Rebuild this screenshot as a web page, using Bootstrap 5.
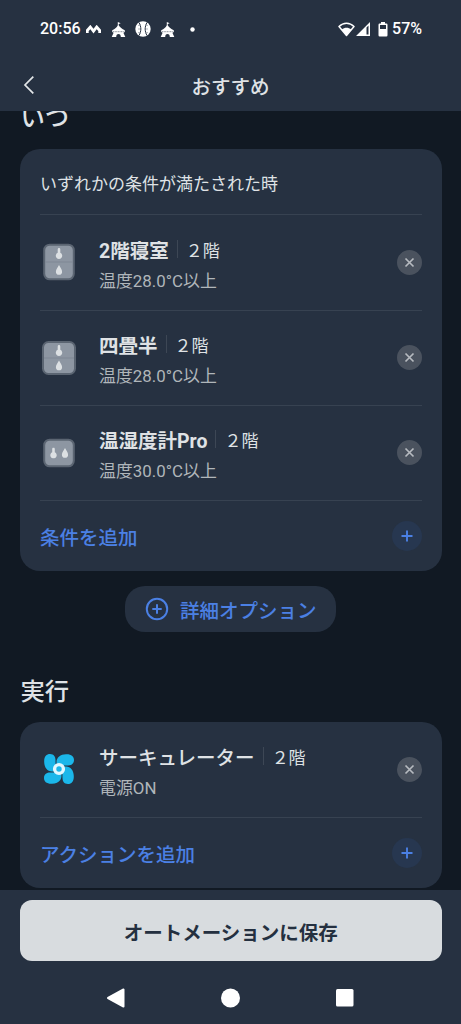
<!DOCTYPE html>
<html lang="ja">
<head>
<meta charset="utf-8">
<meta name="viewport" content="width=device-width, initial-scale=1">
<title>おすすめ</title>
<link rel="stylesheet" href="https://cdn.jsdelivr.net/npm/bootstrap@5.3.0/dist/css/bootstrap.min.css">
<style>
  :root { --panel:#263141; --page:#111923; --line:#374251; --txt:#dfe2e5; --dim:#b0b6ba; --accent:#4b80e4; }
  body { background:var(--page); color:var(--txt); font-family:Roboto,"Noto Sans CJK JP",sans-serif; height:1024px; overflow:hidden; }
  svg { display:block; flex:none; }
  .top-area { height:111px; background:var(--panel); }
  .status { height:58px; padding:0 39px 0 40px; color:#fff; font-size:16px; font-weight:500; }
  .title-bar { height:53px; display:grid; grid-template-columns:60px 1fr 60px; }
  .screen-title { font-size:19.5px; font-weight:500; line-height:28px; padding-top:7px; }
  .scroller { height:779px; padding:0 19.500px 0 20px; overflow:hidden; }
  .sec-title { font-size:24.3px; font-weight:500; line-height:36px; margin:0 0.500px; }
  .panel { background:var(--panel); border-radius:20px; padding:0 19.500px 0 20px; }
  .panel-head { height:66px; font-size:17px; line-height:26px; padding-top:22px; border-bottom:1.500px solid var(--line); }
  .item { height:95px; border-bottom:1px solid var(--line); }
  .item.first { height:96px; }
  .item-icon { width:38px; margin-right:21px; }
  .item-text { padding-top:7px; }
  .item-name { font-size:19.5px; font-weight:700; line-height:30px; position:relative; top:1px; }
  .item-name.kana { font-weight:500; }
  .room { font-size:17px; line-height:30px; }
  .sep { width:1px; height:18px; background:#3d4755; margin:0 8px 4px 8px; }
  .item-sub { font-size:16.900px; line-height:30px; color:var(--dim); }
  .add-row { height:70px; color:var(--accent); font-size:19.5px; font-weight:500; }
  .add-row span, .option-btn span { padding-top:6px; }
  .option-btn { width:211px; height:46px; border-radius:20px; background:var(--panel); color:var(--accent); font-size:19.5px; font-weight:500; margin:15px auto 0; }
  .bottom-area { height:134px; background:var(--panel); padding:10px 19.500px 0 20px; }
  .save-btn { height:61px; border-radius:12px; background:#d8dcdf; color:#243040; font-size:19.5px; font-weight:700; }
  .save-btn span { padding-top:6px; }
  .nav-keys { height:73px; }
</style>
</head>
<body>
<svg width="0" height="0" class="position-absolute">
  <defs>
    <symbol id="tent" viewBox="0 0 14 15"><path fill="currentColor" d="M6.300 0l2.900 1.200-2 .9v1.200C8.500 5.500 10.500 7 13.300 8.300v1.500l-1 .9h-.4l1.900 4.300H9.300c0-2-.8-3-2.300-3s-2.300 1-2.300 3H.2l1.900-4.300h-.4l-1-.9V8.300C3.500 7 5.500 5.500 6.300 3.300z"/><path d="M1.600 9.700h11" stroke="#263141" stroke-width=".6" stroke-dasharray="1 .6"/></symbol>
    <symbol id="close" viewBox="0 0 25 25"><circle cx="12.500" cy="12.500" r="12.500" fill="#4a525e"/><path d="M8.500 8.500l8 8m0-8l-8 8" stroke="#b7bbc0" stroke-width="1.700"/></symbol>
    <symbol id="plus" viewBox="0 0 30 30"><circle cx="15" cy="15" r="15" fill="#273750"/><path d="M9.500 15h11M15 9.500v11" stroke="#4b80e4" stroke-width="1.900"/></symbol>
    <symbol id="thermo" viewBox="0 0 8 11"><path fill="#dce0e3" d="M2.700 1.400a1.300 1.300 0 0 1 2.600 0V4.800a3.200 3.200 0 1 1-2.600 0z"/></symbol>
    <symbol id="drop" viewBox="0 0 8 11"><path fill="#dce0e3" d="M4 .6C5.300 3 7.100 5 7.100 7.200a3.100 3.100 0 0 1-6.200 0C.9 5 2.700 3 4 .6z"/></symbol>
  </defs>
</svg>

<header class="top-area">
  <div class="status d-flex align-items-center">
    <span>20:56</span>
    <svg style="margin-left:5px" width="15" height="9" viewBox="0 0 15 9"><path d="M1.300 8V5.500L4.300 2l3.200 4.200L10.700 2l3 3.500V8" fill="none" stroke="#fff" stroke-width="2.800"/></svg>
    <svg style="margin-left:10px" width="15" height="15"><use href="#tent"/></svg>
    <svg style="margin-left:9px" width="16" height="16" viewBox="0 0 16 16"><circle cx="8" cy="8" r="7.700" fill="#fff"/><path d="M4 1.500c2.400 4 2.400 9 0 13M12 1.500c-2.400 4-2.400 9 0 13" fill="none" stroke="#263141" stroke-width="1"/><path d="M3 4.500l3-.5M3 8h3.500M3 11.500l3 .5M13 4.500l-3-.5M13 8H9.500M13 11.500l-3 .5" stroke="#7b828c" stroke-width=".6"/></svg>
    <svg style="margin-left:9px" width="15" height="15"><use href="#tent"/></svg>
    <svg style="margin-left:15px" width="5" height="5" viewBox="0 0 5 5"><circle cx="2.500" cy="2.500" r="2.200" fill="#fff"/></svg>
    <svg class="ms-auto" width="17" height="15" viewBox="0 0 17 15"><path d="M1 4.600C5.300.2 11.700.2 16 4.600L8.500 13.500z" fill="none" stroke="#fff" stroke-width="1.500" stroke-linejoin="round"/><path d="M3.800 7.600c2.800-2.500 6.600-2.500 9.400 0L8.500 13.500z" fill="#fff"/></svg>
    <svg style="margin-left:1px" width="15" height="14" viewBox="0 0 15 14"><path fill="#fff" fill-rule="evenodd" d="M14 0v14H0zM10.500 5.500v7h2v-9z"/></svg>
    <svg style="margin-left:7px;margin-right:4px" width="10" height="15" viewBox="0 0 10 15"><path fill="#fff" fill-rule="evenodd" d="M3 0h4v1.500h1.300q1.200 0 1.200 1.200v10.600q0 1.200-1.200 1.200H1.700q-1.200 0-1.200-1.200V2.700q0-1.200 1.200-1.200H3zM2 3v4h6V3z"/></svg>
    <span>57%</span>
  </div>
  <div class="title-bar align-items-center">
    <svg style="margin-left:23px" width="12" height="20" viewBox="0 0 12 20"><path d="M10.300 1.700L2 10l8.300 8.300" fill="none" stroke="#e3e6e8" stroke-width="1.700"/></svg>
    <h1 class="screen-title text-center m-0">おすすめ</h1>
  </div>
</header>

<main class="scroller">
  <h2 class="sec-title" style="margin-top:-11px">いつ</h2>
  <section class="panel" style="margin-top:12.500px">
    <div class="panel-head">いずれかの条件が満たされた時</div>
    <div class="item first d-flex align-items-center">
      <div class="item-icon"><svg width="38" height="38" viewBox="0 0 38 38"><rect x="4.200" y="1.700" width="29.600" height="34.600" rx="5.500" fill="#8d96a2" stroke="#5b6572" stroke-width="2"/><path d="M5 19h28" stroke="#7e8794"/><use href="#thermo" x="15" y="5" width="8" height="11"/><use href="#drop" x="15" y="21.500" width="8" height="11"/></svg></div>
      <div class="item-text flex-grow-1">
        <div class="d-flex align-items-center"><span class="item-name">2階寝室</span><span class="sep"></span><span class="room">２階</span></div>
        <div class="item-sub">温度28.0°C以上</div>
      </div>
      <svg width="25" height="25"><use href="#close"/></svg>
    </div>
    <div class="item d-flex align-items-center">
      <div class="item-icon"><svg width="38" height="38" viewBox="0 0 38 38"><rect x="3" y="3" width="32" height="32" rx="5.500" fill="#8d96a2" stroke="#5b6572" stroke-width="2"/><path d="M4 19h30" stroke="#7e8794"/><use href="#thermo" x="15" y="6" width="8" height="11"/><use href="#drop" x="15" y="21" width="8" height="11"/></svg></div>
      <div class="item-text flex-grow-1">
        <div class="d-flex align-items-center"><span class="item-name">四畳半</span><span class="sep"></span><span class="room">２階</span></div>
        <div class="item-sub">温度28.0°C以上</div>
      </div>
      <svg width="25" height="25"><use href="#close"/></svg>
    </div>
    <div class="item d-flex align-items-center">
      <div class="item-icon"><svg width="38" height="38" viewBox="0 0 38 38"><rect x="4.200" y="5.700" width="29.600" height="26.600" rx="5.500" fill="#8d96a2" stroke="#5b6572" stroke-width="2"/><use href="#thermo" x="9.500" y="13.500" width="8" height="11"/><use href="#drop" x="21" y="13.500" width="8" height="11"/></svg></div>
      <div class="item-text flex-grow-1">
        <div class="d-flex align-items-center"><span class="item-name">温湿度計Pro</span><span class="sep"></span><span class="room">２階</span></div>
        <div class="item-sub">温度30.0°C以上</div>
      </div>
      <svg width="25" height="25"><use href="#close"/></svg>
    </div>
    <div class="add-row d-flex align-items-center justify-content-between"><span>条件を追加</span><svg width="30" height="30"><use href="#plus"/></svg></div>
  </section>

  <div class="option-btn d-flex align-items-center justify-content-center">
    <svg width="24" height="24" viewBox="0 0 24 24" style="margin-right:11px"><circle cx="12" cy="12" r="10.200" fill="none" stroke="#4b80e4" stroke-width="2"/><path d="M7.300 12h9.400M12 7.300v9.400" stroke="#4b80e4" stroke-width="2"/></svg>
    <span>詳細オプション</span>
  </div>

  <h2 class="sec-title" style="margin-top:42px">実行</h2>
  <section class="panel" style="margin-top:12px">
    <div class="item first d-flex align-items-center">
      <div class="item-icon"><svg width="38" height="38" viewBox="0 0 38 38"><g fill="#1bb7ea"><path id="blade" d="M18 17C14 10 18.500 4.300 26 4.200C31.500 4 34 6.500 34 10C34 14 31 15.500 28 15.500C24 15.500 23 15 21 19z"/><use href="#blade" transform="rotate(90 19 19)"/><use href="#blade" transform="rotate(180 19 19)"/><use href="#blade" transform="rotate(270 19 19)"/></g><circle cx="19" cy="19" r="4.400" fill="#1bb7ea" stroke="#e2f8ff" stroke-width="3.400"/></svg></div>
      <div class="item-text flex-grow-1">
        <div class="d-flex align-items-center"><span class="item-name kana">サーキュレーター</span><span class="sep"></span><span class="room">２階</span></div>
        <div class="item-sub">電源ON</div>
      </div>
      <svg width="25" height="25"><use href="#close"/></svg>
    </div>
    <div class="add-row d-flex align-items-center justify-content-between"><span>アクションを追加</span><svg width="30" height="30"><use href="#plus"/></svg></div>
  </section>
</main>

<footer class="bottom-area">
  <button type="button" class="save-btn btn w-100 border-0 p-0 d-flex align-items-center justify-content-center"><span>オートメーションに保存</span></button>
  <div class="nav-keys d-flex align-items-center">
    <svg style="margin-left:86px" width="20" height="20" viewBox="0 0 20 20"><path d="M2 10L17.500 1.500v17z" fill="#fff" stroke="#fff" stroke-width="2" stroke-linejoin="round"/></svg>
    <svg style="margin-left:94px" width="20" height="20" viewBox="0 0 20 20"><circle cx="10.500" cy="10" r="9.500" fill="#fff"/></svg>
    <svg style="margin-left:96px" width="18" height="18" viewBox="0 0 18 18"><rect width="17.500" height="17.500" rx="1.500" fill="#fff"/></svg>
  </div>
</footer>
<script src="https://cdn.jsdelivr.net/npm/bootstrap@5.3.0/dist/js/bootstrap.bundle.min.js"></script>
</body>
</html>
